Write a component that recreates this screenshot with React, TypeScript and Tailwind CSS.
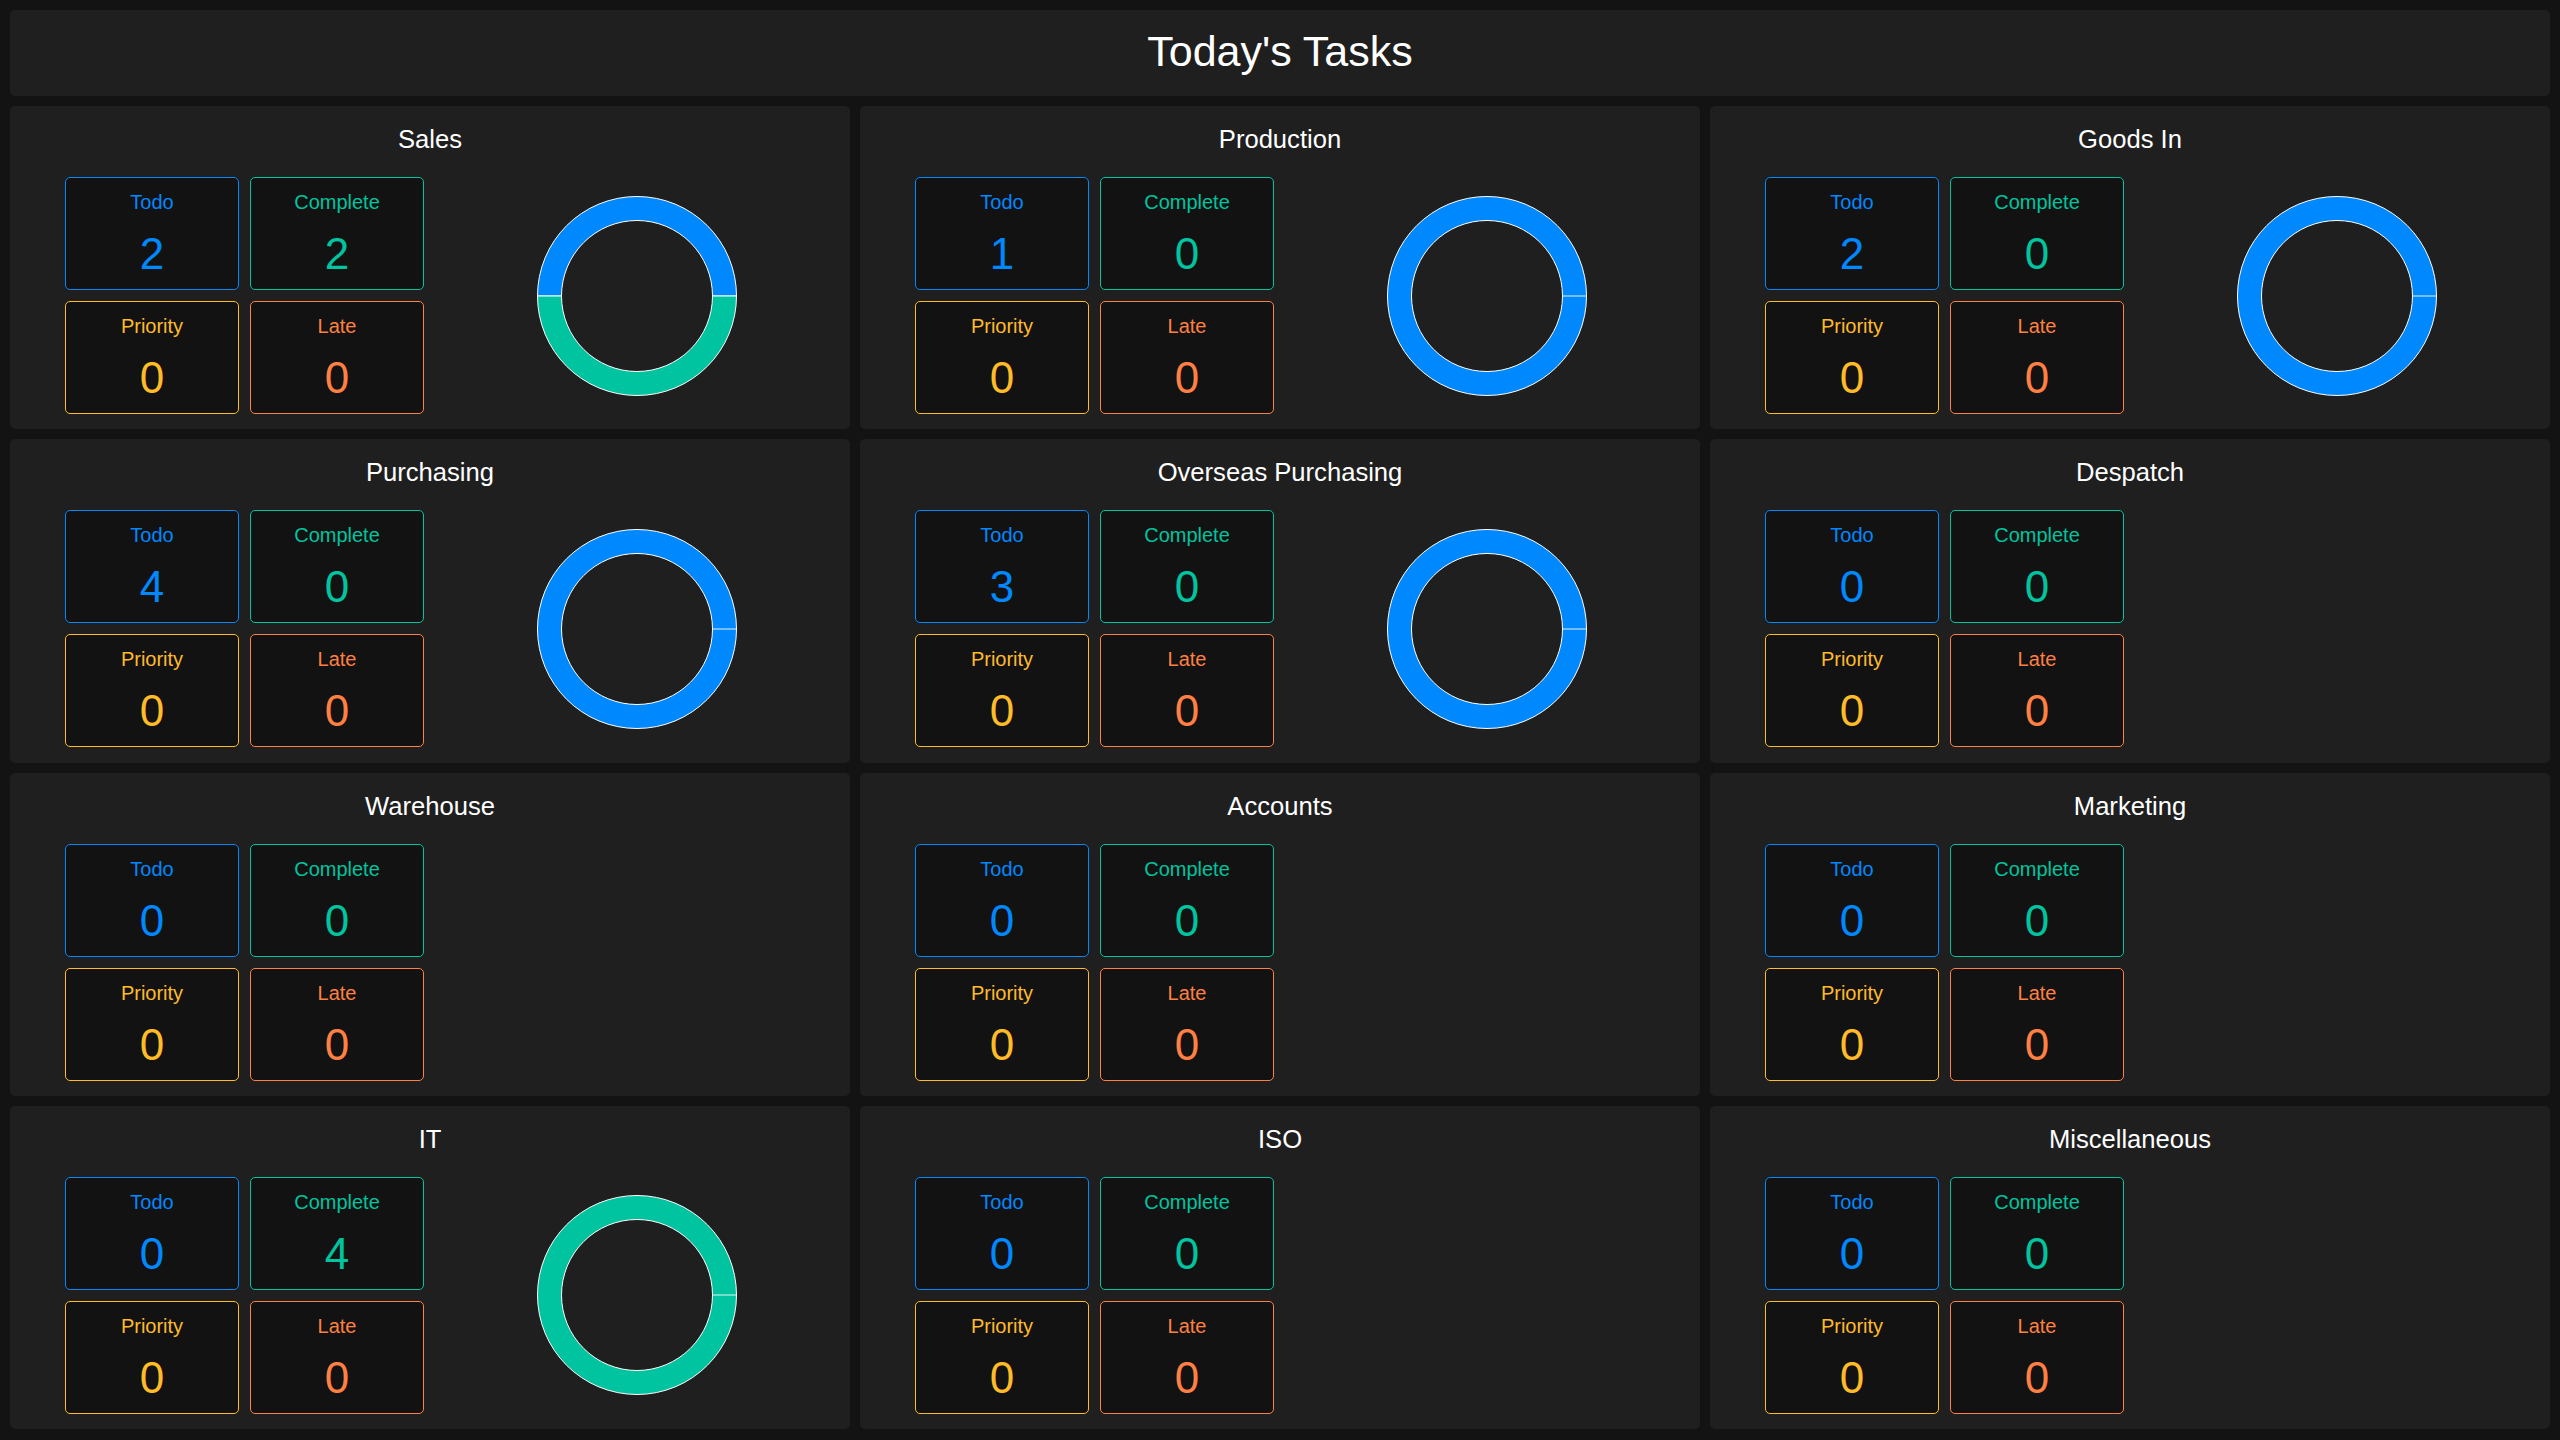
import React from "react";

const COLORS = {
  todo: "#0088FE",
  complete: "#00C49F",
  priority: "#FFBB28",
  late: "#FF8042",
};

type Dept = {
  name: string;
  todo: number;
  complete: number;
  priority: number;
  late: number;
};

const DEPTS: Dept[] = [
  { name: "Sales", todo: 2, complete: 2, priority: 0, late: 0 },
  { name: "Production", todo: 1, complete: 0, priority: 0, late: 0 },
  { name: "Goods In", todo: 2, complete: 0, priority: 0, late: 0 },
  { name: "Purchasing", todo: 4, complete: 0, priority: 0, late: 0 },
  { name: "Overseas Purchasing", todo: 3, complete: 0, priority: 0, late: 0 },
  { name: "Despatch", todo: 0, complete: 0, priority: 0, late: 0 },
  { name: "Warehouse", todo: 0, complete: 0, priority: 0, late: 0 },
  { name: "Accounts", todo: 0, complete: 0, priority: 0, late: 0 },
  { name: "Marketing", todo: 0, complete: 0, priority: 0, late: 0 },
  { name: "IT", todo: 0, complete: 4, priority: 0, late: 0 },
  { name: "ISO", todo: 0, complete: 0, priority: 0, late: 0 },
  { name: "Miscellaneous", todo: 0, complete: 0, priority: 0, late: 0 },
];

const C = 101;
const R_OUT = 99.5;
const R_IN = 75.5;

// angle in degrees, 0 = 3 o'clock, counterclockwise on screen
const pt = (r: number, deg: number) => {
  const a = (deg * Math.PI) / 180;
  return `${(C + r * Math.cos(a)).toFixed(3)} ${(C - r * Math.sin(a)).toFixed(3)}`;
};

const sector = (a0: number, a1: number) => {
  const large = a1 - a0 > 180 ? 1 : 0;
  return [
    `M ${pt(R_OUT, a0)}`,
    `A ${R_OUT} ${R_OUT} 0 ${large} 0 ${pt(R_OUT, a1)}`,
    `L ${pt(R_IN, a1)}`,
    `A ${R_IN} ${R_IN} 0 ${large} 1 ${pt(R_IN, a0)}`,
    "Z",
  ].join(" ");
};

const Donut = ({ todo, complete }: { todo: number; complete: number }) => {
  const total = todo + complete;
  if (total === 0) return null;
  const parts = [
    { v: todo, c: COLORS.todo },
    { v: complete, c: COLORS.complete },
  ].filter((p) => p.v > 0);

  return (
    <svg width={202} height={202} viewBox="0 0 202 202">
      {parts.length === 1 ? (
        <g>
          <path
            d={`M ${C + R_OUT} ${C} A ${R_OUT} ${R_OUT} 0 1 0 ${C - R_OUT} ${C} A ${R_OUT} ${R_OUT} 0 1 0 ${C + R_OUT} ${C} Z M ${C + R_IN} ${C} A ${R_IN} ${R_IN} 0 1 1 ${C - R_IN} ${C} A ${R_IN} ${R_IN} 0 1 1 ${C + R_IN} ${C} Z`}
            fill={parts[0].c}
            fillRule="evenodd"
            stroke="#ffffff"
            strokeWidth={1}
          />
          <line
            x1={C + R_IN}
            y1={C}
            x2={C + R_OUT}
            y2={C}
            stroke="#ffffff"
            strokeOpacity={0.6}
            strokeWidth={1.5}
          />
        </g>
      ) : (
        (() => {
          let start = 0;
          return parts.map((p, i) => {
            const sweep = (p.v / total) * 360;
            const d = sector(start, start + sweep);
            start += sweep;
            return <path key={i} d={d} fill={p.c} stroke="#ffffff" strokeWidth={1} />;
          });
        })()
      )}
    </svg>
  );
};

const StatBox = ({ label, value, color }: { label: string; value: number; color: string }) => (
  <div
    className="w-[174px] h-[113px] rounded-[5px] border bg-[#121212] flex flex-col items-center"
    style={{ borderColor: color, color }}
  >
    <div className="pt-[12px] text-[20px] leading-[24px]">{label}</div>
    <div className="mt-[18px] text-[44px] leading-[44px]">{value}</div>
  </div>
);

const DeptCard = ({ d }: { d: Dept }) => (
  <div className="bg-[#1f1f1f] rounded-[5px] flex flex-col pt-[19px] min-h-0">
    <div className="text-center text-white text-[25.6px] leading-[29px]">{d.name}</div>
    <div className="mt-[23px] flex">
      <div className="ml-[55px] grid grid-cols-[174px_174px] gap-[11px]">
        <StatBox label="Todo" value={d.todo} color={COLORS.todo} />
        <StatBox label="Complete" value={d.complete} color={COLORS.complete} />
        <StatBox label="Priority" value={d.priority} color={COLORS.priority} />
        <StatBox label="Late" value={d.late} color={COLORS.late} />
      </div>
      <div className="flex-1 flex items-center justify-center">
        <Donut todo={d.todo} complete={d.complete} />
      </div>
    </div>
  </div>
);

export default function App() {
  return (
    <div
      className="h-screen w-full bg-[#131313] px-[10px] pt-[10px] pb-[11px] flex flex-col gap-[10px]"
      style={{ fontFamily: '"Liberation Sans", Arial, sans-serif' }}
    >
      <div className="h-[86px] shrink-0 rounded-[5px] bg-[#1f1f1f] flex items-center justify-center pb-[3px]">
        <h1 className="text-white text-[43px] leading-none">Today's Tasks</h1>
      </div>
      <div className="flex-1 min-h-0 grid grid-cols-3 grid-rows-4 gap-[10px]">
        {DEPTS.map((d) => (
          <DeptCard key={d.name} d={d} />
        ))}
      </div>
    </div>
  );
}
